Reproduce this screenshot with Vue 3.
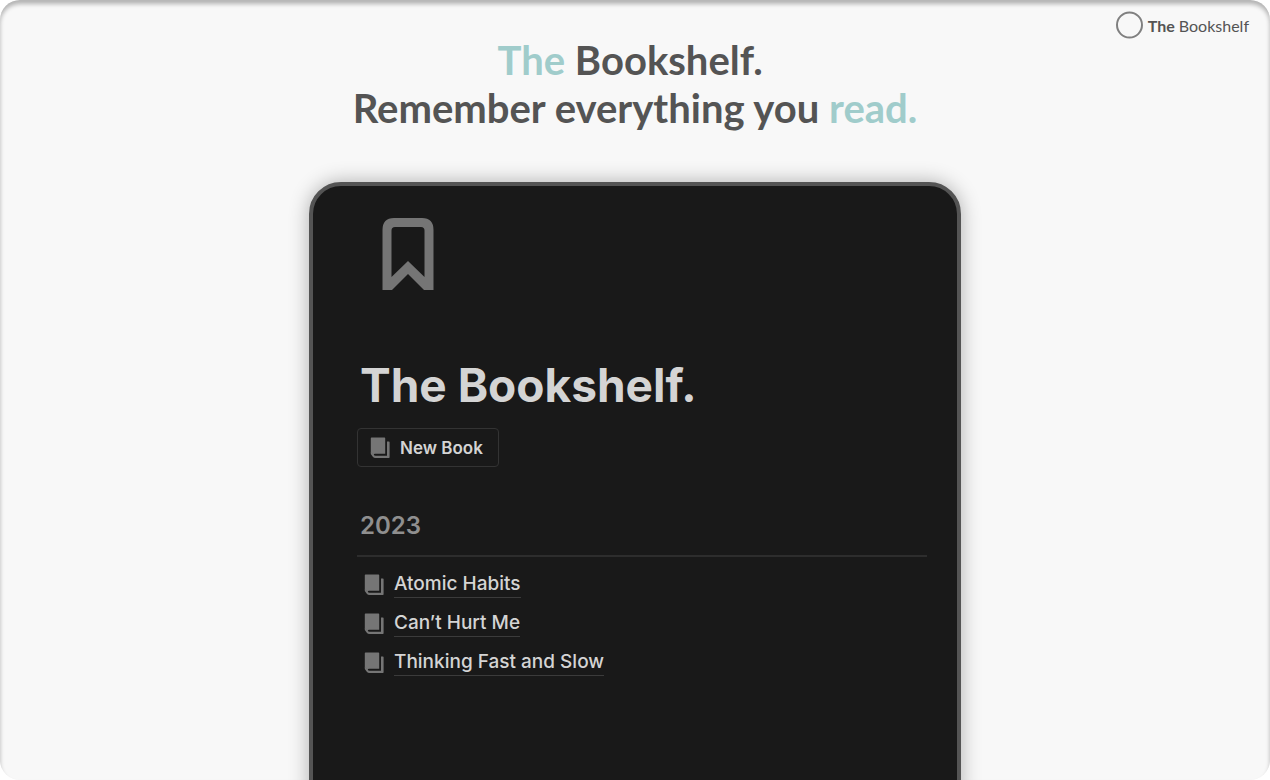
<script setup>
const books = ['Atomic Habits', 'Can’t Hurt Me', 'Thinking Fast and Slow']
</script>

<template>
  <main class="slide">
    <div class="brand">
      <svg class="ring" viewBox="0 0 28 28" aria-hidden="true">
        <circle cx="14.500" cy="14" r="12.500" />
      </svg>
      <span><strong>The</strong> Bookshelf</span>
    </div>

    <h1 class="headline">
      <span class="accent">The</span> Bookshelf.&nbsp;<br />
      Remember everything you <span class="accent">read.</span>
    </h1>

    <section class="card">
      <svg class="bookmark" viewBox="0 0 52 74" aria-hidden="true">
        <path
          fill-rule="evenodd"
          d="M12 1H40Q51.500 1 51.500 13V73H42L26 57L10 73H0.500V13Q0.500 1 12 1ZM13 10Q9.500 10 9.500 13.500V60L26 44L42.500 60V13.500Q42.500 10 39 10Z"
        />
      </svg>
      <h2 class="title">The Bookshelf.</h2>
      <button type="button" class="new-book">
        <svg class="book" viewBox="0 0 20 22" aria-hidden="true">
          <path d="M1.500 0.500H14.500Q15.200 0.500 15.200 1.200V16.800H5Q3.800 16.800 3.800 18L0.800 15.500V1.200Q0.800 0.500 1.500 0.500Z" />
          <path d="M17 4.500H18.900Q19.600 4.500 19.600 5.200V20.300Q19.600 21 18.900 21H5.500Q3.800 21 2.800 19.800L0.800 17V15L3.800 17.500Q4 18.700 5.500 18.700H17Z" />
        </svg>
        <span>New Book</span>
      </button>
      <h3 class="year">2023</h3>
      <ul class="books">
        <li v-for="book in books" :key="book">
          <svg class="book" viewBox="0 0 20 22" aria-hidden="true">
            <path d="M1.500 0.500H14.500Q15.200 0.500 15.200 1.200V16.800H5Q3.800 16.800 3.800 18L0.800 15.500V1.200Q0.800 0.500 1.500 0.500Z" />
            <path d="M17 4.500H18.900Q19.600 4.500 19.600 5.200V20.300Q19.600 21 18.900 21H5.500Q3.800 21 2.800 19.800L0.800 17V15L3.800 17.500Q4 18.700 5.500 18.700H17Z" />
          </svg>
          <a href="#">{{ book }}</a>
        </li>
      </ul>
    </section>
  </main>
</template>

<style>
body {
  margin: 0;
  background: #fff;
}
</style>

<style scoped>
.slide {
  box-sizing: border-box;
  height: 100vh;
  overflow: hidden;
  display: flex;
  flex-direction: column;
  align-items: center;
  border-radius: 20px;
  background: #f8f8f8;
  box-shadow: inset 0 4px 4px rgba(0, 0, 0, 0.28);
  color: #545454;
  font-family: Lato, sans-serif;
}
.brand {
  align-self: flex-end;
  flex: none;
  display: flex;
  align-items: center;
  gap: 5px;
  height: 28px;
  margin: 11px 21px 0 0;
  font-size: 16px;
}
.ring {
  width: 28px;
  height: 28px;
  fill: none;
  stroke: #808080;
  stroke-width: 2;
}
.headline {
  flex: none;
  margin: -3px 0 0;
  font-size: 40px;
  line-height: 48px;
  font-weight: 700;
  text-align: center;
}
.accent {
  color: #a0cccb;
}
.card {
  box-sizing: border-box;
  flex: 1 0 auto;
  width: 100%;
  max-width: 652px;
  margin: 50px 0 -40px;
  padding: 31px 30px 60px 44px;
  border: 4px solid #545454;
  border-radius: 32px;
  background: #191919;
  box-shadow: 0 0 20px rgba(0, 0, 0, 0.3);
  font-family: Inter, sans-serif;
  color: #d4d4d4;
}
.bookmark {
  display: block;
  width: 52px;
  height: 74px;
  margin-left: 25px;
  fill: #757575;
}
.title {
  margin: 66px 0 0 3px;
  font-size: 46px;
  line-height: 56px;
  font-weight: 700;
}
.new-book {
  display: flex;
  align-items: center;
  gap: 10px;
  height: 39px;
  margin: 15px 0 0;
  padding: 0 15px 0 12px;
  border: 1px solid #333;
  border-radius: 4px;
  background: transparent;
  color: #d4d4d4;
  font-family: inherit;
  font-size: 17px;
  font-weight: 600;
}
.book {
  flex: none;
  width: 20px;
  height: 22px;
  fill: #757575;
}
.year {
  margin: 43px 0 0;
  padding: 0 0 13px 3px;
  border-bottom: 2px solid #2d2d2d;
  font-size: 24px;
  line-height: 32px;
  font-weight: 600;
  color: #8f8f8f;
}
.books {
  margin: 8px 0 0;
  padding: 0 0 0 7px;
  list-style: none;
}
.books li {
  display: flex;
  align-items: center;
  gap: 10px;
  height: 39px;
}
.books a {
  border-bottom: 1px solid #3b3b3b;
  color: #d4d4d4;
  font-size: 19px;
  line-height: 26px;
  font-weight: 500;
  text-decoration: none;
}
</style>
